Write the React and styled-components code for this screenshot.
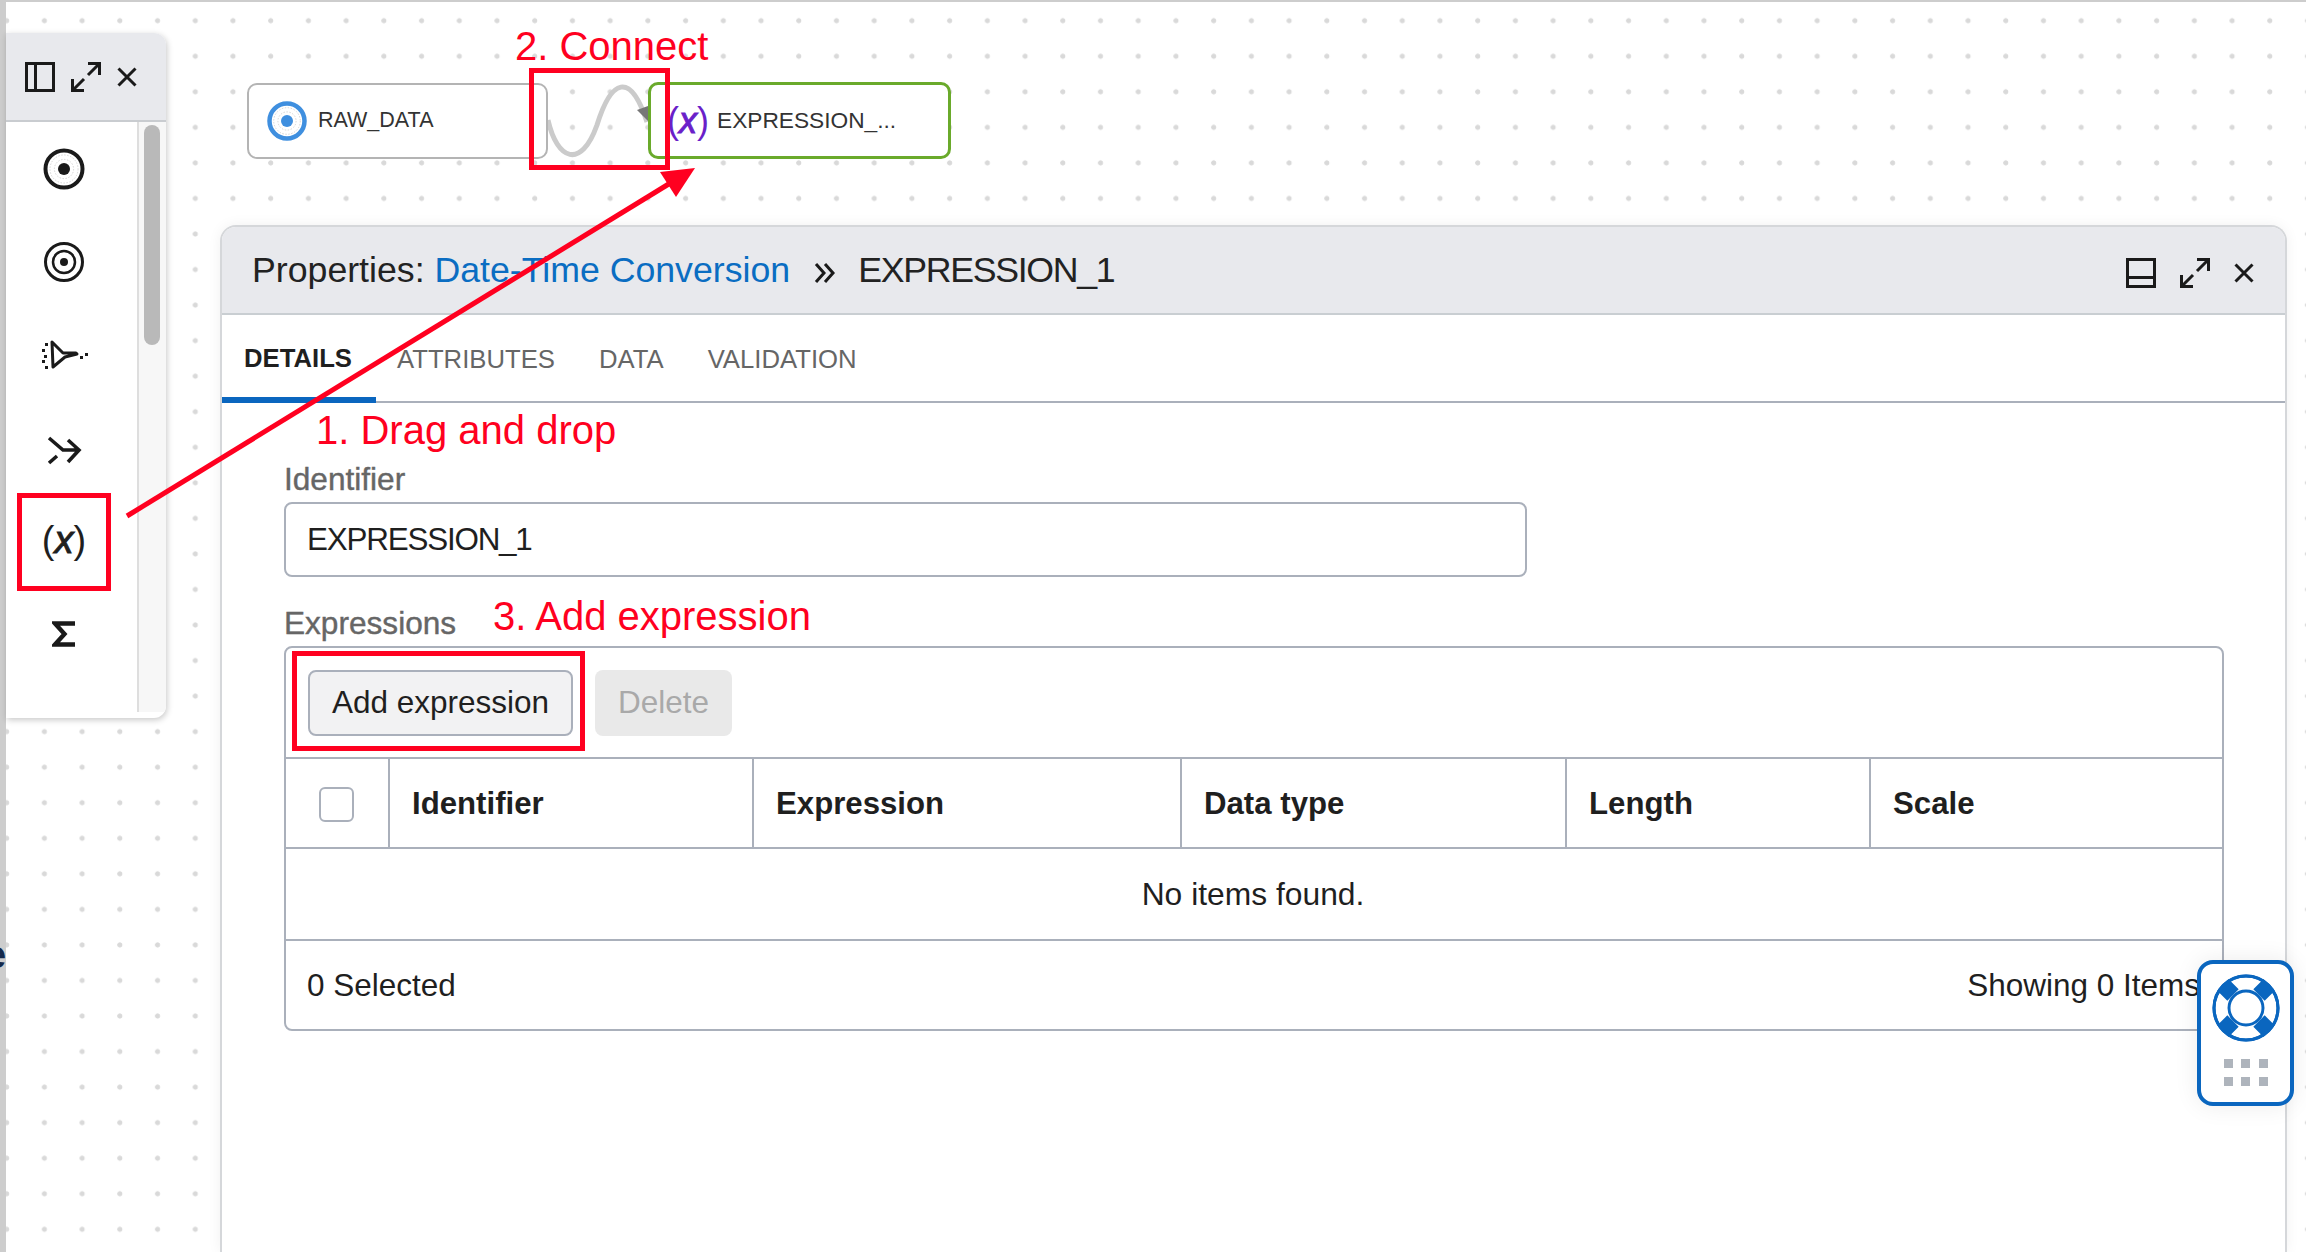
import React from 'react';
import styled, { createGlobalStyle } from 'styled-components';

const Global = createGlobalStyle`
  html, body { margin: 0; padding: 0; background: #fff; }
  * { box-sizing: border-box; }
  body { font-family: "Liberation Sans", Arial, sans-serif; color: #1f1f1f; }
`;

const Page = styled.div`
  position: relative;
  width: 2306px;
  height: 1252px;
  overflow: hidden;
  display: flex;
  align-items: flex-start;
  background-color: #fff;
  background-image: radial-gradient(circle at 6.7px 20.7px, #d9d9d9 2.2px, transparent 2.9px);
  background-size: 37.72px 35.55px;
  box-shadow: inset 6px 0 0 #cdcdcd, inset 0 2px 0 #cdcdcd;
`;

const EdgeGlyph = styled.span`
  position: absolute;
  left: -15px;
  top: 933px;
  font-size: 38px;
  line-height: 44px;
  font-weight: 700;
  color: #14294b;
  width: 21px;
  overflow: hidden;
`;

/* Palette window */
const Palette = styled.aside`
  flex: none;
  margin: 33px 0 0 6px;
  width: 160px;
  height: 685px;
  display: flex;
  flex-direction: column;
  background: #fff;
  border-radius: 0 12px 12px 0;
  box-shadow: 1px 2px 6px rgba(0, 0, 0, 0.22);
  overflow: hidden;
`;
const PaletteHead = styled.div`
  flex: none;
  height: 89px;
  display: flex;
  align-items: center;
  gap: 16px;
  padding-left: 19px;
  background: #e8e9ed;
  border-bottom: 2px solid #c9ccd0;
`;
const PaletteBody = styled.div`
  flex: 1;
  display: flex;
  min-height: 0;
  padding-bottom: 6px;
`;
const ToolColumn = styled.div`
  flex: none;
  width: 131px;
  padding-right: 15px;
  display: flex;
  flex-direction: column;
`;
const ToolCell = styled.div`
  flex: none;
  height: 93px;
  display: flex;
  align-items: center;
  justify-content: center;
  padding-top: ${p => p.$nudge || 0}px;
`;
const ToolText = styled.span`
  font-size: 38px;
  line-height: 1;
  color: #1f1f1f;
  margin-top: -2px;
  & > i { font-weight: 400; -webkit-text-stroke: 1px #1f1f1f; }
`;
const ScrollTrack = styled.div`
  flex: 1;
  padding: 3px 6px 0 5px;
  background: #f7f7f7;
  border-left: 2px solid #dedede;
`;
const ScrollThumb = styled.div`
  width: 16px;
  height: 220px;
  border-radius: 8px;
  background: #b9b9b9;
`;

/* Main column */
const Main = styled.main`
  flex: none;
  width: 2067px;
  height: 1252px;
  margin-left: 54px;
  display: flex;
  flex-direction: column;
`;
const Canvas = styled.div`
  position: relative;
  flex: none;
  height: 225px;
`;
const Node = styled.div`
  position: absolute;
  top: ${p => p.$top}px;
  left: ${p => p.$left}px;
  width: ${p => p.$width}px;
  height: ${p => p.$height}px;
  display: flex;
  align-items: center;
  gap: ${p => p.$gap}px;
  padding-left: ${p => p.$pad}px;
  background: #fff;
  border-radius: 10px;
  border: ${p => p.$selected ? '3px solid #6aaa2b' : '2px solid #b4b4b4'};
`;
const NodeLabel = styled.span`
  font-size: ${p => p.$size}px;
  color: #333;
  white-space: nowrap;
  margin-top: -1px;
`;
const NodeFx = styled.span`
  font-size: 36px;
  line-height: 1;
  color: #6a1fc9;
  & > i { font-weight: 400; -webkit-text-stroke: 1px #6a1fc9; }
`;
const Wire = styled.svg`
  position: absolute;
  left: 325px;
  top: 75px;
  overflow: visible;
`;

const Panel = styled.section`
  flex: 1;
  min-height: 0;
  display: flex;
  flex-direction: column;
  background: #fff;
  border: 2px solid #d5d7da;
  border-bottom: none;
  border-radius: 16px 16px 0 0;
  box-shadow: 0 0 14px rgba(0, 0, 0, 0.06);
`;
const PanelHead = styled.header`
  flex: none;
  height: 88px;
  display: flex;
  align-items: center;
  justify-content: space-between;
  padding: 0 31px 0 30px;
  background: #e8e9ed;
  border-bottom: 2px solid #c9ced2;
  border-radius: 14px 14px 0 0;
`;
const Title = styled.h2`
  margin: 0;
  display: flex;
  align-items: center;
  font-size: 35.7px;
  font-weight: 400;
  color: #222;
  white-space: pre;
`;
const TitleLink = styled.a`
  color: #0a6dc2;
`;
const TitleItem = styled.span`
  letter-spacing: -1.3px;
`;
const Chevrons = styled.svg`
  margin: 6px 22px 0 24px;
`;
const HeadActions = styled.div`
  display: flex;
  align-items: center;
  gap: 24px;
  margin-top: 6px;
`;
const Tabs = styled.nav`
  flex: none;
  height: 88px;
  display: flex;
  border-bottom: 2px solid #aab0bb;
`;
const Tab = styled.div`
  height: 88px;
  display: flex;
  align-items: center;
  padding: ${p => p.$active ? 4 : 0}px 21px 0 ${p => p.$active ? 22 : 21}px;
  margin-right: ${p => p.$active ? 0 : 2}px;
  width: ${p => p.$active ? '154px' : 'auto'};
  font-size: 25.7px;
  font-weight: ${p => p.$active ? 700 : 400};
  color: ${p => p.$active ? '#1f1f1f' : '#666'};
  border-bottom: ${p => p.$active ? '6px solid #0a66bf' : 'none'};
`;
const Form = styled.div`
  padding: 57px 0 0 62px;
`;
const Label = styled.label`
  display: block;
  height: 38px;
  margin-bottom: 4px;
  font-size: 31.6px;
  line-height: 38px;
  color: #666;
  -webkit-text-stroke: 0.4px #666;
`;
const Input = styled.div`
  width: 1243px;
  height: 75px;
  margin-bottom: 27px;
  padding-left: 21px;
  display: flex;
  align-items: center;
  font-size: 31.4px;
  letter-spacing: -1.2px;
  color: #1f1f1f;
  border: 2px solid #aab0bb;
  border-radius: 8px;
`;
const Table = styled.div`
  width: 1940px;
  border: 2px solid #aab0bb;
  border-radius: 8px;
`;
const Toolbar = styled.div`
  height: 111px;
  display: flex;
  align-items: center;
  gap: 22px;
  padding-left: 22px;
  border-bottom: 2px solid #aab0bb;
`;
const Button = styled.div`
  height: 66px;
  width: ${p => p.$width}px;
  display: flex;
  align-items: center;
  justify-content: center;
  font-size: 31.5px;
  border-radius: 8px;
  color: ${p => p.$disabled ? '#a9a9a9' : '#1f1f1f'};
  background: ${p => p.$disabled ? '#e9e9e9' : '#f2f2f3'};
  border: ${p => p.$disabled ? 'none' : '2px solid #aab0bb'};
`;
const HeadRow = styled.div`
  height: 90px;
  display: grid;
  grid-template-columns: 104px 364px 428px 385px 304px 1fr;
  border-bottom: 2px solid #aab0bb;
`;
const HeadCell = styled.div`
  display: flex;
  align-items: center;
  justify-content: ${p => p.$center ? 'center' : 'flex-start'};
  padding: 2px ${p => p.$center ? 1 : 0}px 0 ${p => p.$center ? 0 : 22}px;
  font-size: 31.2px;
  font-weight: 700;
  color: #1f1f1f;
  border-right: ${p => p.$last ? 'none' : '2px solid #aab0bb'};
`;
const Check = styled.span`
  display: block;
  width: 35px;
  height: 35px;
  background: #fff;
  border: 2px solid #aab0bb;
  border-radius: 6px;
`;
const EmptyRow = styled.div`
  height: 92px;
  display: flex;
  align-items: center;
  justify-content: center;
  padding-right: 2px;
  font-size: 31.8px;
  border-bottom: 2px solid #aab0bb;
`;
const Footer = styled.div`
  height: 88px;
  display: flex;
  align-items: center;
  justify-content: space-between;
  padding: 0 22px 0 21px;
  font-size: 31.5px;
`;

/* Overlays */
const HelpWidget = styled.div`
  position: absolute;
  left: 2197px;
  top: 960px;
  width: 97px;
  height: 146px;
  padding-top: 10px;
  display: flex;
  flex-direction: column;
  align-items: center;
  gap: 17px;
  background: #fff;
  border: 4px solid #0a66bf;
  border-radius: 16px;
  box-shadow: 0 0 24px rgba(0, 0, 0, 0.08);
`;
const DotGrid = styled.div`
  display: grid;
  grid-template-columns: repeat(3, 9px);
  grid-auto-rows: 9px;
  gap: 9px 8.5px;
`;
const Dot = styled.span`
  background: #aeb4bc;
`;
const RedBox = styled.div`
  position: absolute;
  left: ${p => p.$x}px;
  top: ${p => p.$y}px;
  width: ${p => p.$w}px;
  height: ${p => p.$h}px;
  border: 5px solid #ff0020;
`;
const RedText = styled.div`
  position: absolute;
  left: ${p => p.$x}px;
  top: ${p => p.$y}px;
  font-size: 40px;
  line-height: 46px;
  color: #ff0020;
  white-space: nowrap;
`;
const ArrowLayer = styled.svg`
  position: absolute;
  left: 0;
  top: 0;
  pointer-events: none;
`;

const stroke = { fill: 'none', stroke: '#1a1a1a', strokeWidth: 3 };

const IconSplitV = () => (
  <svg width="30" height="30" viewBox="0 0 30 30"><rect x="1.5" y="1.5" width="27" height="27" {...stroke} /><path d="M10.5 1.5V28.5" {...stroke} /></svg>
);
const IconSplitH = () => (
  <svg width="30" height="30" viewBox="0 0 30 30"><rect x="1.5" y="1.5" width="27" height="27" {...stroke} /><path d="M1.5 19.5H28.5" {...stroke} /></svg>
);
const IconExpand = () => (
  <svg width="30" height="30" viewBox="0 0 30 30">
    <path d="M17 13L28 2M17 1.5H28.5V13M13 17L2 28M1.5 17V28.5H13" {...stroke} />
  </svg>
);
const IconClose = () => (
  <svg width="20" height="20" viewBox="0 0 20 20"><path d="M1.5 1.5L18.5 18.5M18.5 1.5L1.5 18.5" {...stroke} /></svg>
);
const Target = ({ color = '#1a1a1a', r = 18.5, sw = 4, dot = 6, size = 42 }) => {
  const c = size / 2;
  return (
    <svg width={size} height={size} viewBox={`0 0 ${size} ${size}`}>
      <circle cx={c} cy={c} r={r} fill="none" stroke={color} strokeWidth={sw} />
      <circle cx={c} cy={c} r={dot} fill={color} />
      <circle cx={c} cy={c} r={r * 0.76} fill="none" stroke="#bbb" strokeWidth="0.6" strokeDasharray="1.5 1.5" />
      <circle cx={c} cy={c} r={r * 0.52} fill="none" stroke="#bbb" strokeWidth="0.6" strokeDasharray="1.5 1.5" />
    </svg>
  );
};
const Bullseye = () => (
  <svg width="42" height="42" viewBox="0 0 42 42">
    <circle cx="21" cy="21" r="18.5" fill="none" stroke="#1a1a1a" strokeWidth="3" />
    <circle cx="21" cy="21" r="11" fill="none" stroke="#1a1a1a" strokeWidth="2.5" />
    <circle cx="21" cy="21" r="4" fill="#1a1a1a" />
  </svg>
);
const IconFilter = () => (
  <svg width="50" height="32" viewBox="0 0 50 32">
    <path d="M13 3L24 14H37L38 15L26 18L14 28Z" fill="none" stroke="#1a1a1a" strokeWidth="3" strokeLinejoin="round" />
    <g fill="#1a1a1a">
      <rect x="6" y="4" width="3" height="3" /><rect x="3" y="10" width="3" height="3" />
      <rect x="5" y="16" width="3" height="3" /><rect x="3" y="21" width="3" height="3" /><rect x="6" y="27" width="3" height="3" />
      <rect x="41" y="17" width="3" height="3" /><rect x="46" y="14" width="3" height="3" />
    </g>
  </svg>
);
const IconMerge = () => (
  <svg width="36" height="32" viewBox="0 0 36 32">
    <path d="M3 3L17 15H32M22 5L33 15L22 27M3 28L11 21" fill="none" stroke="#1a1a1a" strokeWidth="3.6" />
  </svg>
);
const IconSigma = () => (
  <svg width="24" height="26" viewBox="0 0 24 26">
    <path d="M23 2.5H3L12.5 13L3 23.5H23" fill="none" stroke="#1a1a1a" strokeWidth="4.4" />
  </svg>
);
const Lifebuoy = () => (
  <svg width="68" height="68" viewBox="0 0 68 68">
    <circle cx="34" cy="34" r="32" fill="#fff" stroke="#0a66bf" strokeWidth="3" />
    <path d="M21 21L11 11M47 21L57 11M21 47L11 57M47 47L57 57" stroke="#0a66bf" strokeWidth="16" />
    <circle cx="34" cy="34" r="32" fill="none" stroke="#0a66bf" strokeWidth="3" />
    <circle cx="34" cy="34" r="17" fill="#fff" stroke="#0a66bf" strokeWidth="3" />
  </svg>
);

export default function App() {
  return (
    <>
      <Global />
      <Page>
        <EdgeGlyph>e</EdgeGlyph>
        <Palette>
          <PaletteHead>
            <IconSplitV />
            <IconExpand />
            <IconClose />
          </PaletteHead>
          <PaletteBody>
            <ToolColumn>
              <ToolCell><Target /></ToolCell>
              <ToolCell><Bullseye /></ToolCell>
              <ToolCell><IconFilter /></ToolCell>
              <ToolCell $nudge={6}><IconMerge /></ToolCell>
              <ToolCell><ToolText>(<i>x</i>)</ToolText></ToolCell>
              <ToolCell><IconSigma /></ToolCell>
            </ToolColumn>
            <ScrollTrack><ScrollThumb /></ScrollTrack>
          </PaletteBody>
        </Palette>
        <Main>
          <Canvas>
            <Wire width="105" height="80" viewBox="0 0 105 80">
              <path d="M3 45C12 85 36 95 52 50C66 5 85 -5 102 47" fill="none" stroke="#cbcbcb" strokeWidth="5" />
              <path d="M92 35L103 31L103 46Z" fill="#777" />
            </Wire>
            <Node $top={83} $left={27} $width={301} $height={76} $gap={10} $pad={17}>
              <Target color="#3f8fdf" size={42} r={17.5} sw={4.5} dot={6} />
              <NodeLabel $size={21.5}>RAW_DATA</NodeLabel>
            </Node>
            <Node $top={82} $left={428} $width={303} $height={77} $selected $gap={8} $pad={16}>
              <NodeFx>(<i>x</i>)</NodeFx>
              <NodeLabel $size={22.7}>EXPRESSION_...</NodeLabel>
            </Node>
          </Canvas>
          <Panel>
            <PanelHead>
              <Title>
                Properties: <TitleLink>Date-Time Conversion</TitleLink>
                <Chevrons width="22" height="22" viewBox="0 0 22 22">
                  <path d="M2 2L10 11L2 20M11 2L19 11L11 20" fill="none" stroke="#1a1a1a" strokeWidth="3" />
                </Chevrons>
                <TitleItem>EXPRESSION_1</TitleItem>
              </Title>
              <HeadActions>
                <IconSplitH />
                <IconExpand />
                <IconClose />
              </HeadActions>
            </PanelHead>
            <Tabs>
              <Tab $active>DETAILS</Tab>
              <Tab>ATTRIBUTES</Tab>
              <Tab>DATA</Tab>
              <Tab>VALIDATION</Tab>
            </Tabs>
            <Form>
              <Label>Identifier</Label>
              <Input>EXPRESSION_1</Input>
              <Label>Expressions</Label>
              <Table>
                <Toolbar>
                  <Button $width={265}>Add expression</Button>
                  <Button $width={137} $disabled>Delete</Button>
                </Toolbar>
                <HeadRow>
                  <HeadCell $center><Check /></HeadCell>
                  <HeadCell>Identifier</HeadCell>
                  <HeadCell>Expression</HeadCell>
                  <HeadCell>Data type</HeadCell>
                  <HeadCell>Length</HeadCell>
                  <HeadCell $last>Scale</HeadCell>
                </HeadRow>
                <EmptyRow>No items found.</EmptyRow>
                <Footer>
                  <span>0 Selected</span>
                  <span>Showing 0 Items</span>
                </Footer>
              </Table>
            </Form>
          </Panel>
        </Main>

        <HelpWidget>
          <Lifebuoy />
          <DotGrid>
            {Array.from({ length: 6 }, (_, i) => <Dot key={i} />)}
          </DotGrid>
        </HelpWidget>

        <ArrowLayer width="2306" height="1252" viewBox="0 0 2306 1252">
          <path d="M127 516L672 182" stroke="#ff0020" strokeWidth="5" fill="none" />
          <path d="M695 168L660 172L676 197Z" fill="#ff0020" />
        </ArrowLayer>
        <RedBox $x={17} $y={493} $w={94} $h={98} />
        <RedBox $x={529} $y={68} $w={141} $h={102} />
        <RedBox $x={292} $y={651} $w={293} $h={100} />
        <RedText $x={515} $y={23}>2. Connect</RedText>
        <RedText $x={316} $y={407}>1. Drag and drop</RedText>
        <RedText $x={493} $y={593}>3. Add expression</RedText>
      </Page>
    </>
  );
}
